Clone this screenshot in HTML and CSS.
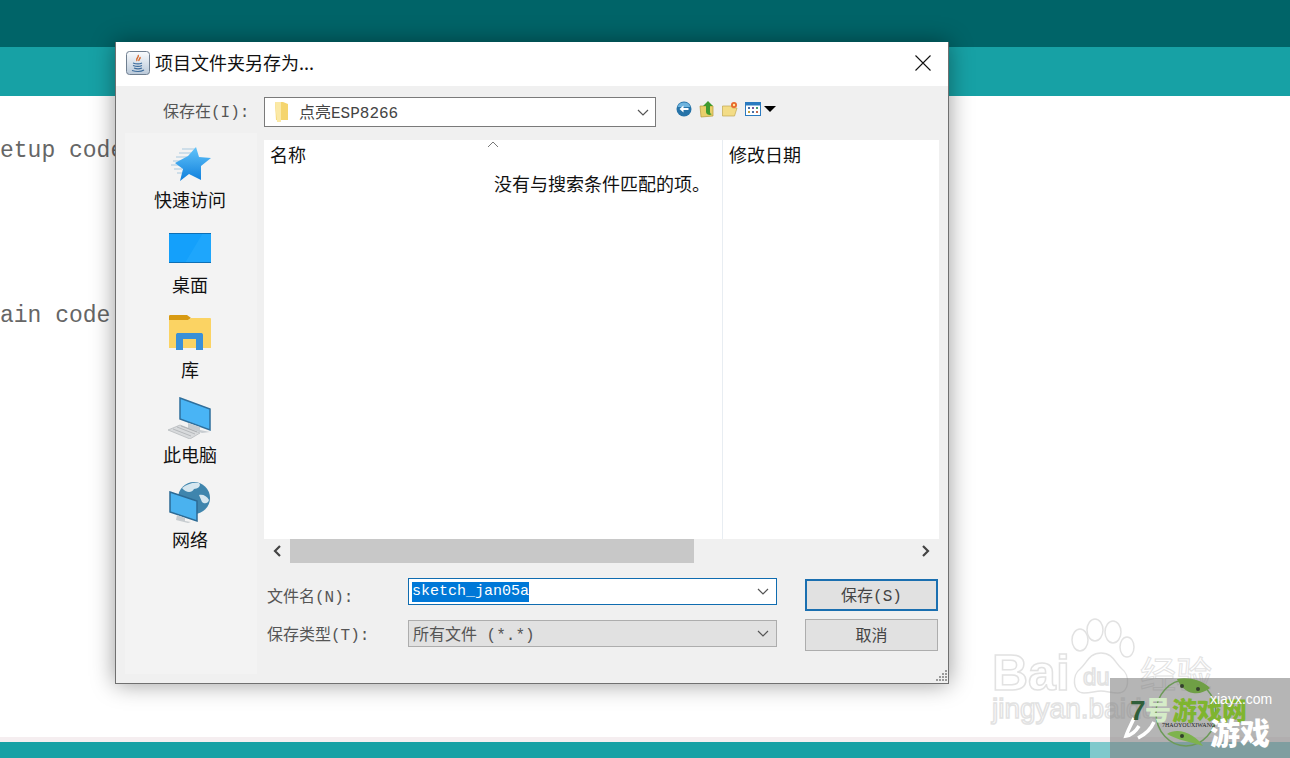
FILE: index.html
```html
<!DOCTYPE html>
<html lang="en">
<head>
    <meta charset="UTF-8">
    <meta name="viewport" content="width=device-width, initial-scale=1.0">
    <title>项目文件夹另存为</title>
    <link rel="stylesheet" href="styles.css">
</head>
<body>
    <!-- Arduino window behind the dialog -->
    <div class="app-top"></div>
    <div class="app-tabs"></div>
    <div class="editor">
        <div class="code-line">etup code</div>
        <div class="code-line code-line-second">ain code</div>
    </div>
    <div class="app-strip"></div>
    <div class="app-status"><div class="status-light"></div></div>

    <!-- Baidu watermark -->
    <svg class="baidu-mark" width="240" height="125" viewBox="0 0 240 125">
        <g fill="#fff" stroke="#e2e2e2" stroke-width="1.5">
            <text x="2" y="75" class="baidu-big">Bai</text>
            <ellipse cx="90" cy="25" rx="8" ry="11"/>
            <ellipse cx="105" cy="15" rx="8" ry="11"/>
            <ellipse cx="123" cy="17" rx="8" ry="11"/>
            <ellipse cx="137" cy="32" rx="7" ry="10"/>
            <path d="M111 38c-12 0-14 10-21 16-8 6-8 24 4 24 7 0 11-2 17-2s10 2 17 2c12 0 12-18 4-24-7-6-9-16-21-16z"/>
            <text x="93" y="70" class="baidu-small">du</text>
            <text x="150" y="73" class="baidu-cn">经验</text>
            <text x="2" y="103" class="baidu-url">jingyan.baidu</text>
        </g>
    </svg>

    <!-- Game site watermark -->
    <div class="game-mark">
        <svg width="180" height="80" viewBox="0 0 180 80">
            <ellipse cx="76" cy="35" rx="30" ry="33" fill="none" stroke="#6c9a58" stroke-width="1.500"/>
            <path d="M67 1c10-2 24 0 33 9-5 4-11 6-17 5-7-1-13-7-16-14z" fill="#6f9f45"/>
            <circle cx="72" cy="8" r="2" fill="#33402c"/>
            <circle cx="88" cy="11" r="2" fill="#33402c"/>
            <path d="M57 56c10 6 24 8 36 12-6-10-24-20-36-12z" fill="#7eb34e"/>
            <circle cx="72" cy="58" r="2" fill="#33402c"/>
            <path d="M24 40c-3 7-6 12-8 18 6-1 10-5 13-10M44 44c-3 7-8 12-16 16" fill="none" stroke="#fff" stroke-width="3.500"/>
            <text x="20" y="42" class="gm-seven">7</text>
            <text x="35" y="42" class="gm-hao">号</text>
            <text x="62" y="42" class="gm-green">游戏网</text>
            <text x="100" y="26" class="gm-url">xiayx.com</text>
            <text x="52" y="49" class="gm-pinyin">7HAOYOUXIWANG</text>
            <text x="100" y="66" class="gm-white">游戏</text>
        </svg>
    </div>

    <div class="dialog">
        <div class="dialog-title">
            <svg class="java-icon" width="24" height="24" viewBox="0 0 24 24">
                <defs>
                    <linearGradient id="javaBg" x1="0" y1="0" x2="0" y2="1">
                        <stop offset="0" stop-color="#fafcfe"/>
                        <stop offset="1" stop-color="#b9c8d8"/>
                    </linearGradient>
                </defs>
                <rect x="0.5" y="0.5" width="23" height="23" rx="3" fill="url(#javaBg)" stroke="#6f7f90"/>
                <path d="M12 4c2 2-3 3-1 6M14 6c1 2-2 2-1 4" fill="none" stroke="#d8672a" stroke-width="1.4"/>
                <path d="M7 12c3 1 7 1 9 0M7 14.500c3 1 7 1 9 0M8 17c2 .8 6 .8 8 0" fill="none" stroke="#3d6c9c" stroke-width="1.2"/>
                <path d="M6 19.500c4 1.200 9 1.200 12-.5" fill="none" stroke="#3d6c9c" stroke-width="1.2"/>
            </svg>
            <span class="title-text">项目文件夹另存为...</span>
            <svg class="close-icon" width="16" height="16" viewBox="0 0 16 16">
                <path d="M.5.5l15 15M15.500.5l-15 15" stroke="#111" stroke-width="1.1" fill="none"/>
            </svg>
        </div>

        <div class="dialog-toolbar">
            <span class="look-label">保存在(I):</span>
            <div class="look-combo">
                <svg width="16" height="20" viewBox="0 0 16 20">
                    <path d="M1 0h8l5 2v16H2z" fill="#f5d56e"/>
                    <path d="M1 0h6v20H3z" fill="#fbe9a6"/>
                </svg>
                <span class="look-name">点亮ESP8266</span>
                <svg class="combo-arrow" width="12" height="7" viewBox="0 0 12 7">
                    <path d="M1 1l5 5 5-5" fill="none" stroke="#555" stroke-width="1.200"/>
                </svg>
            </div>
            <div class="tool-icons">
                <svg width="16" height="16" viewBox="0 0 16 16">
                    <circle cx="8" cy="8" r="7.500" fill="#2673a8"/>
                    <path d="M1.500 6a7 7 0 0 1 13 0z" fill="#6fb4de"/>
                    <path d="M3.500 8l4-3.500V7h5v2h-5v2.500z" fill="#fff"/>
                </svg>
                <svg width="16" height="18" viewBox="0 0 16 18">
                    <path d="M1 6h9l4 0v10l-12 1z" fill="#e8cf6a" stroke="#b59a3a" stroke-width=".7"/>
                    <path d="M9 1L4 6h3v6c0 2 2 3 4 3l2-1c-2 0-2-1-2-3V6h3z" fill="#3e9a2e"/>
                </svg>
                <svg width="16" height="16" viewBox="0 0 16 16">
                    <path d="M.5 5h9l1 2H15l-2.500 8H.5z" fill="#f3dc86" stroke="#c2a750" stroke-width=".7"/>
                    <circle cx="12" cy="4" r="3" fill="#e8672a"/>
                    <circle cx="12" cy="4" r="1.200" fill="#ffe9a0"/>
                </svg>
                <div class="view-button">
                    <svg width="16" height="14" viewBox="0 0 16 14">
                        <rect x=".5" y=".5" width="15" height="13" fill="#fff" stroke="#2a7ac0"/>
                        <rect x="1" y="1" width="14" height="2.500" fill="#2a7ac0"/>
                        <path d="M3 5h2v2H3z" fill="#4a6fa5"/>
                        <path d="M7 5h2v2H7z" fill="#7a5aa0"/>
                        <path d="M11 5h2v2h-2z" fill="#4a9a70"/>
                        <path d="M3 9h2v2H3z" fill="#c2a040"/>
                        <path d="M7 9h2v2H7z" fill="#4a6fa5"/>
                        <path d="M11 9h2v2h-2z" fill="#c06a50"/>
                    </svg>
                    <span class="view-caret"></span>
                </div>
            </div>
        </div>

        <div class="dialog-body">
            <div class="places">
                <div class="place place-quick">
                    <svg width="44" height="38" viewBox="0 0 44 38">
                        <defs>
                            <linearGradient id="starFill" x1="0" y1="0" x2="0" y2="1">
                                <stop offset="0" stop-color="#62c4fa"/>
                                <stop offset="1" stop-color="#0f7fdc"/>
                            </linearGradient>
                        </defs>
                        <path d="M14 5h13M11 9h12M8 13h12M5 17h10M3 21h9M6 25h8M9 29h5" stroke="#a9c9df" stroke-width="1" fill="none"/>
                        <path d="M28 3l3 10 12 1-10 8 0 14-12-6-9 7 3-12-8-6 13-7z" fill="url(#starFill)"/>
                    </svg>
                    <span class="place-name">快速访问</span>
                </div>
                <div class="place place-desktop">
                    <svg width="42" height="30" viewBox="0 0 42 30">
                        <rect x="0" y="0" width="42" height="30" fill="#14a0fb"/>
                        <path d="M16 30L34 0h8v30z" fill="#1ea6fc"/>
                        <rect x="0" y="0" width="42" height="1" fill="#0d6fb5"/>
                        <rect x="0" y="29" width="42" height="1" fill="#0d6fb5"/>
                    </svg>
                    <span class="place-name">桌面</span>
                </div>
                <div class="place place-library">
                    <svg width="42" height="36" viewBox="0 0 42 36">
                        <path d="M0 1c0-1 1-1 1-1h17l4 3-4 3H0z" fill="#d89a12"/>
                        <path d="M0 5h19l3-2h19c.5 0 1 .5 1 1v29H0z" fill="#fbd363"/>
                        <path d="M7 35V20c0-1.500 1-2 2-2h23c1 0 2 .5 2 2v15h-7V24H14v11z" fill="#3a90d8"/>
                    </svg>
                    <span class="place-name">库</span>
                </div>
                <div class="place">
                    <svg width="44" height="42" viewBox="0 0 44 42">
                        <path d="M12 1l30 11v21L12 22z" fill="#49b4f5" stroke="#2f6f9c" stroke-width="1.500"/>
                        <path d="M20 26l12 4v3l10 2-8 1-14-5z" fill="#c7ccd0"/>
                        <path d="M0 33l12-5 20 8-10 6z" fill="#d8dadc" stroke="#a8acb0" stroke-width=".6"/>
                        <path d="M5 32l18 7M9 30l18 7M13 29l16 6" stroke="#9da1a5" stroke-width=".6" fill="none"/>
                    </svg>
                    <span class="place-name">此电脑</span>
                </div>
                <div class="place">
                    <svg width="42" height="42" viewBox="0 0 42 42">
                        <circle cx="25" cy="16" r="16" fill="#3f85ad"/>
                        <path d="M13 6c5-4 11-6 17-5 3 3-2 6-5 6-2 4-8 4-12-1zM30 13c4-1 8 1 10 5-1 4-5 4-7 2z" fill="#d5e6ef"/>
                        <path d="M1 10l27 9v20L1 30z" fill="#4ab2ef" stroke="#2c6a94" stroke-width="1.500"/>
                        <path d="M8 33l8 3v3l6 1-3 1-12-3z" fill="#c7ccd0"/>
                    </svg>
                    <span class="place-name">网络</span>
                </div>
            </div>

            <div class="chooser">
                <div class="file-list">
                    <div class="col col-name">
                        <span class="col-head">名称</span>
                        <svg class="sort-arrow" width="12" height="7" viewBox="0 0 12 7">
                            <path d="M1 6l5-5 5 5" fill="none" stroke="#777"/>
                        </svg>
                        <span class="empty-msg">没有与搜索条件匹配的项。</span>
                    </div>
                    <div class="col col-date">
                        <span class="col-head">修改日期</span>
                    </div>
                </div>
                <div class="hscroll">
                    <svg class="scroll-end" width="26" height="24" viewBox="0 0 26 24">
                        <path d="M16 7l-5 5 5 5" fill="none" stroke="#444" stroke-width="2.200"/>
                    </svg>
                    <div class="scroll-track"><div class="scroll-thumb"></div></div>
                    <svg class="scroll-end" width="26" height="24" viewBox="0 0 26 24">
                        <path d="M10 7l5 5-5 5" fill="none" stroke="#444" stroke-width="2.200"/>
                    </svg>
                </div>
                <div class="save-form">
                    <div class="fields">
                        <label class="field-label field-label-name">文件名(N):</label>
                        <div class="field field-name">
                            <span class="selected">sketch_jan05a</span>
                            <svg class="combo-arrow" width="12" height="7" viewBox="0 0 12 7">
                                <path d="M1 1l5 5 5-5" fill="none" stroke="#555" stroke-width="1.200"/>
                            </svg>
                        </div>
                        <label class="field-label field-label-type">保存类型(T):</label>
                        <div class="field field-type">
                            <span class="type-text">所有文件 (*.*)</span>
                            <svg class="combo-arrow" width="12" height="7" viewBox="0 0 12 7">
                                <path d="M1 1l5 5 5-5" fill="none" stroke="#555" stroke-width="1.200"/>
                            </svg>
                        </div>
                    </div>
                    <div class="buttons">
                        <button class="btn btn-default">保存(S)</button>
                        <button class="btn">取消</button>
                    </div>
                </div>
            </div>
        </div>
        <svg class="grip" width="12" height="12" viewBox="0 0 12 12">
            <path d="M9 0h2v2H9zM6 3h2v2H6zM9 3h2v2H9zM3 6h2v2H3zM6 6h2v2H6zM9 6h2v2H9zM0 9h2v2H0zM3 9h2v2H3zM6 9h2v2H6zM9 9h2v2H9z" fill="#9a9a9a"/>
        </svg>
    </div>
</body>
</html>
```

FILE: styles.css
```css
body {
    margin: 0;
    width: 1290px;
    height: 758px;
    display: flex;
    flex-direction: column;
    overflow: hidden;
    background: #fff;
    font-family: "Noto Sans CJK SC", sans-serif;
}
.app-top {
    height: 47px;
    background: #006468;
}
.app-tabs {
    height: 49px;
    background: #17a1a5;
}
.editor {
    flex: 1;
    padding-top: 41px;
    font-family: "Liberation Mono", monospace;
    font-size: 23px;
    line-height: 28px;
    color: #666;
}
.code-line-second {
    margin-top: 137px;
}
.app-strip {
    height: 5px;
    background: #f5eef0;
}
.app-status {
    height: 16px;
    background: #17a1a5;
    display: flex;
    justify-content: flex-end;
}
.status-light {
    width: 200px;
    background: #7fc9cc;
}

/* watermarks */
.baidu-mark {
    position: absolute;
    left: 990px;
    top: 615px;
}
.baidu-big {
    font-family: "Liberation Sans", sans-serif;
    font-size: 50px;
    font-weight: bold;
}
.baidu-small {
    font-family: "Liberation Sans", sans-serif;
    font-size: 24px;
}
.baidu-cn {
    font-size: 36px;
    stroke-width: 1;
}
.baidu-url {
    font-family: "Liberation Sans", sans-serif;
    font-size: 28px;
}
.game-mark {
    position: absolute;
    left: 1110px;
    top: 678px;
    width: 180px;
    height: 80px;
    background: rgba(127, 127, 127, 0.58);
}
.gm-seven {
    font-family: "Liberation Sans", sans-serif;
    font-size: 28px;
    font-weight: bold;
    fill: #2f5f3a;
}
.gm-hao {
    font-size: 26px;
    font-weight: 900;
    fill: #d5ecc8;
}
.gm-green {
    font-size: 25px;
    font-weight: 900;
    fill: #7fb52f;
}
.gm-url {
    font-family: "Liberation Sans", sans-serif;
    font-size: 14px;
    fill: #fff;
}
.gm-pinyin {
    font-family: "Liberation Serif", serif;
    font-size: 6px;
    fill: #222;
}
.gm-white {
    font-size: 30px;
    font-weight: 900;
    fill: #fff;
}

/* dialog */
.dialog {
    position: absolute;
    left: 115px;
    top: 42px;
    width: 834px;
    height: 642px;
    box-sizing: border-box;
    display: flex;
    flex-direction: column;
    background: #f0f0f0;
    border: 1px solid #707070;
    border-top: none;
    box-shadow: 0 0 22px rgba(0, 0, 0, 0.4);
    color: #111;
}
.dialog-title {
    height: 44px;
    flex: none;
    box-sizing: border-box;
    display: flex;
    align-items: center;
    background: #fff;
    padding: 0 17px 2px 10px;
}
.java-icon {
    margin-right: 5px;
}
.title-text {
    flex: 1;
    font-size: 18px;
    margin-bottom: 2px;
}
.dialog-toolbar {
    height: 47px;
    flex: none;
    display: flex;
    align-items: flex-start;
    padding-top: 11px;
    box-sizing: border-box;
}
.look-label {
    width: 148px;
    padding: 2px 0 0 47px;
    box-sizing: border-box;
    font-family: "Liberation Mono", "Noto Sans CJK SC", monospace;
    font-size: 16px;
    line-height: 28px;
    color: #555;
    white-space: nowrap;
}
.look-combo {
    width: 392px;
    height: 30px;
    box-sizing: border-box;
    display: flex;
    align-items: center;
    background: #fff;
    border: 1px solid #7a7a7a;
    padding: 0 6px 0 9px;
}
.look-name {
    flex: 1;
    margin: 0 0 2px 9px;
    font-family: "Liberation Mono", "Noto Sans CJK SC", monospace;
    font-size: 16px;
    color: #444;
}
.tool-icons {
    display: flex;
    align-items: center;
    gap: 7px;
    margin-left: 20px;
    height: 24px;
}
.view-button {
    display: flex;
    align-items: center;
    gap: 3px;
}
.view-caret {
    border-left: 6px solid transparent;
    border-right: 6px solid transparent;
    border-top: 6px solid #000;
}
.dialog-body {
    flex: 1;
    display: flex;
    padding-left: 9px;
    min-height: 0;
}
.places {
    width: 132px;
    height: 541px;
    flex: none;
    box-sizing: border-box;
    padding-right: 2px;
    display: flex;
    flex-direction: column;
    background: #f3f3f3;
}
.place {
    height: 85px;
    box-sizing: border-box;
    padding-bottom: 1px;
    display: flex;
    flex-direction: column;
    align-items: center;
    justify-content: flex-end;
    font-size: 18px;
    line-height: 24px;
    flex: none;
}
.place:first-child {
    height: 79px;
}
.place svg {
    display: block;
    margin-bottom: 3px;
}
.place-quick svg {
    margin-bottom: 5px;
}
.place-desktop svg {
    margin-bottom: 9px;
}
.place-library svg {
    margin-bottom: 6px;
}
.chooser {
    flex: 1;
    display: flex;
    flex-direction: column;
    padding: 7px 9px 0 7px;
}
.file-list {
    height: 399px;
    flex: none;
    display: flex;
    background: #fff;
    font-size: 18px;
}
.col {
    position: relative;
    padding: 1px 0 0 6px;
}
.col-name {
    width: 452px;
    border-right: 1px solid #e8edf2;
}
.col-date {
    flex: 1;
}
.sort-arrow {
    position: absolute;
    left: 223px;
    top: 1px;
}
.empty-msg {
    position: absolute;
    left: 230px;
    top: 30px;
    white-space: nowrap;
}
.hscroll {
    height: 24px;
    flex: none;
    display: flex;
}
.scroll-track {
    flex: 1;
}
.scroll-thumb {
    width: 404px;
    height: 24px;
    background: #c8c8c8;
}
.save-form {
    display: flex;
    padding-top: 15px;
}
.fields {
    display: grid;
    grid-template-columns: 141px 369px;
    grid-auto-rows: 27px;
    row-gap: 15px;
    padding-left: 3px;
    align-items: center;
}
.field-label {
    font-family: "Liberation Mono", "Noto Sans CJK SC", monospace;
    font-size: 16px;
    color: #555;
    white-space: nowrap;
}
.field-label-name {
    padding-top: 6px;
}
.field-label-type {
    padding-bottom: 2px;
}
.field {
    height: 27px;
    box-sizing: border-box;
    display: flex;
    align-items: center;
    justify-content: space-between;
    padding: 0 7px 0 3px;
    font-family: "Liberation Mono", "Noto Sans CJK SC", monospace;
}
.field-name {
    background: #fff;
    border: 1px solid #0f6cb0;
    font-size: 15px;
}
.field-type {
    background: #e1e1e1;
    border: 1px solid #adadad;
    font-size: 16px;
    color: #555;
}
.selected {
    background: #0078d7;
    color: #fff;
    line-height: 20px;
}
.type-text {
    padding: 0 0 2px 1px;
    white-space: pre;
}
.buttons {
    width: 133px;
    margin: 1px 0 0 28px;
    display: flex;
    flex-direction: column;
    gap: 8px;
}
.btn {
    height: 32px;
    padding: 0 0 2px;
    background: #e1e1e1;
    border: 1px solid #adadad;
    font-family: "Liberation Mono", "Noto Sans CJK SC", monospace;
    font-size: 16px;
    color: #444;
}
.btn-default {
    border: 2px solid #1a6fb0;
}
.grip {
    position: absolute;
    right: 0;
    bottom: 1px;
}
```
